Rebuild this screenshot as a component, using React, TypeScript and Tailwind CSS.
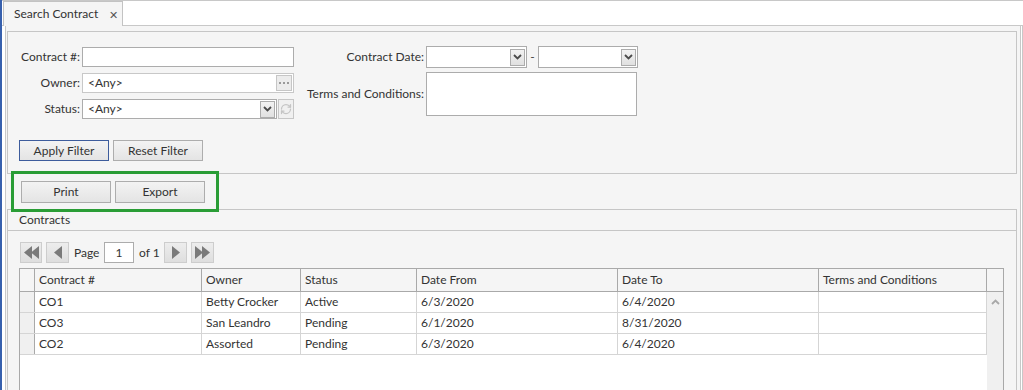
import React from "react";

const Chevron = () => (
  <svg width="9" height="6" viewBox="0 0 9 6">
    <path d="M1 1 L4.5 4.5 L8 1" fill="none" stroke="#4a4a4a" strokeWidth="1.8" />
  </svg>
);

const ArrowBox = () => (
  <div className="w-[15px] h-[17px] border border-[#acacac] bg-gradient-to-b from-[#f2f2f2] to-[#e0e0e0] flex items-center justify-center">
    <Chevron />
  </div>
);

const Tri = ({ dir }: { dir: "l" | "r" }) => (
  <svg width="8" height="13" viewBox="0 0 8 13">
    {dir === "l" ? <path d="M8 0 L0 6.5 L8 13 Z" fill="#7a7a7a" /> : <path d="M0 0 L8 6.5 L0 13 Z" fill="#7a7a7a" />}
  </svg>
);

const PagerBtn = ({ children, w = 22 }: { children: React.ReactNode; w?: number }) => (
  <div
    className="h-[21px] shrink-0 border border-[#cdcdcd] bg-gradient-to-b from-[#ededed] to-[#dedede] flex items-center justify-center"
    style={{ width: w }}
  >
    {children}
  </div>
);

const Btn = ({ label, blue }: { label: string; blue?: boolean }) => (
  <div
    className={`w-[90px] h-full border ${blue ? "border-[#3d5c9c]" : "border-[#adadad]"} bg-gradient-to-b from-[#f3f3f3] to-[#e4e4e4] flex items-center justify-center text-[#333] whitespace-nowrap`}
  >
    {label}
  </div>
);

const cols = "grid grid-cols-[15px_167px_99px_116px_201px_201px_168px_16px]";
const rowCols = "grid grid-cols-[15px_167px_99px_116px_201px_201px_168px]";

const rows = [
  ["CO1", "Betty Crocker", "Active", "6/3/2020", "6/4/2020", ""],
  ["CO3", "San Leandro", "Pending", "6/1/2020", "8/31/2020", ""],
  ["CO2", "Assorted", "Pending", "6/3/2020", "6/4/2020", ""],
];

export default function App() {
  return (
    <div className="w-[1023px] h-[390px] overflow-hidden bg-white flex relative font-['Lato',sans-serif] text-[12px] text-[#333] leading-none whitespace-nowrap">
      <div className="w-[2px] shrink-0 bg-[#3760ad]" />
      <div className="flex-1 flex flex-col min-w-0">
        {/* tab strip */}
        <div className="h-[26px] shrink-0 border-t border-[#c8c8c8] border-b flex items-end">
          <div className="w-[1px]" />
          <div className="w-[120px] h-[25px] -mb-px bg-[#f5f5f5] border border-b-0 border-[#c3c3c3] flex items-center pl-[10px] gap-[11px]">
            <span className="text-[#333]">Search Contract</span>
            <span className="text-[11px] text-[#555]">✕</span>
          </div>
        </div>
        {/* content */}
        <div className="flex-1 flex min-h-0">
          <div className="w-[3px] shrink-0" />
          <div className="w-[1016px] shrink-0 bg-[#f5f5f5] border-l border-r border-[#c8c8c8] flex flex-col pl-[1px] pt-[5px]">
            {/* filter panel */}
            <div className="w-[1010px] h-[143px] shrink-0 border border-[#c6c6c6] flex flex-col pt-[15px] pl-0">
              <div className="flex items-start">
                {/* left group */}
                <div className="flex flex-col gap-[6px]">
                  <div className="flex items-center h-[20px]">
                    <div className="w-[73px] text-right pr-[1px]">Contract #:</div>
                    <div className="ml-[1px] w-[212px] h-[20px] bg-white border border-[#acacac]" />
                  </div>
                  <div className="flex items-center h-[20px]">
                    <div className="w-[73px] text-right pr-[1px]">Owner:</div>
                    <div className="ml-[1px] w-[212px] h-[20px] bg-white border border-[#c8c8c8] flex items-center justify-between pl-[5px] pr-[1px]">
                      <span>&lt;Any&gt;</span>
                      <div className="w-[16px] h-[16px] border border-[#c6c6c6] bg-[#ececec] flex items-center justify-center gap-[2px]">
                        <span className="w-[2px] h-[2px] bg-[#9a9a9a]" />
                        <span className="w-[2px] h-[2px] bg-[#9a9a9a]" />
                        <span className="w-[2px] h-[2px] bg-[#9a9a9a]" />
                      </div>
                    </div>
                  </div>
                  <div className="flex items-center h-[20px]">
                    <div className="w-[73px] text-right pr-[1px]">Status:</div>
                    <div className="ml-[1px] w-[195px] h-[20px] bg-white border border-[#acacac] flex items-center justify-between pl-[5px] pr-[1px]">
                      <span>&lt;Any&gt;</span>
                      <ArrowBox />
                    </div>
                    <div className="ml-[1px] w-[16px] h-[20px] border border-[#c6c6c6] bg-[#f0f0f0] flex items-center justify-center">
                      <svg width="12" height="12" viewBox="0 0 24 24" fill="none" stroke="#c4c4c4" strokeWidth="2.5" strokeLinecap="round" strokeLinejoin="round">
                        <path d="M3 12a9 9 0 0 1 9-9 9.75 9.75 0 0 1 6.74 2.74L21 8" />
                        <path d="M21 3v5h-5" />
                        <path d="M21 12a9 9 0 0 1-9 9 9.75 9.75 0 0 1-6.74-2.74L3 16" />
                        <path d="M8 16H3v5" />
                      </svg>
                    </div>
                  </div>
                </div>
                {/* right group */}
                <div className="flex flex-col gap-[4px] ml-[5px] -mt-[1px]">
                  <div className="flex items-center h-[22px]">
                    <div className="w-[126px] text-right pr-[1px]">Contract Date:</div>
                    <div className="ml-[1px] w-[101px] h-[22px] bg-white border border-[#acacac] flex items-center justify-end pr-[1px]">
                      <ArrowBox />
                    </div>
                    <div className="w-[11px] text-center text-[#444]">-</div>
                    <div className="w-[100px] h-[22px] bg-white border border-[#acacac] flex items-center justify-end pr-[1px]">
                      <ArrowBox />
                    </div>
                  </div>
                  <div className="flex items-center h-[44px]">
                    <div className="w-[126px] text-right pr-[1px]">Terms and Conditions:</div>
                    <div className="ml-[1px] w-[211px] h-[44px] bg-white border border-[#acacac]" />
                  </div>
                </div>
              </div>
              <div className="flex gap-[4px] h-[21px] mt-[21px] pl-[11px]">
                <Btn label="Apply Filter" blue />
                <Btn label="Reset Filter" />
              </div>
            </div>
            {/* toolbar */}
            <div className="h-[35px] shrink-0 pt-[7px] pl-[14px] flex gap-[4px]">
              <div className="h-[22px] flex gap-[4px]">
                <Btn label="Print" />
                <Btn label="Export" />
              </div>
            </div>
            {/* contracts panel */}
            <div className="w-[1010px] flex-1 border border-[#c6c6c6] border-b-0 flex flex-col">
              <div className="h-[21px] shrink-0 border-b border-[#c6c6c6] flex items-center pl-[11px]">Contracts</div>
              <div className="mt-[11px] pl-[12px] flex items-center h-[21px]">
                <PagerBtn w={22}>
                  <div className="flex -space-x-[1px]">
                    <Tri dir="l" />
                    <Tri dir="l" />
                  </div>
                </PagerBtn>
                <div className="ml-[4px]">
                  <PagerBtn w={23}>
                    <Tri dir="l" />
                  </PagerBtn>
                </div>
                <span className="ml-[5px] w-[26px]">Page</span>
                <div className="ml-[4px] w-[30px] h-[21px] bg-white border border-[#acacac] flex items-center justify-center">1</div>
                <span className="ml-[5px] w-[20px]">of 1</span>
                <div className="ml-[5px]">
                  <PagerBtn w={23}>
                    <Tri dir="r" />
                  </PagerBtn>
                </div>
                <div className="ml-[4px]">
                  <PagerBtn w={23}>
                    <div className="flex -space-x-[1px]">
                      <Tri dir="r" />
                      <Tri dir="r" />
                    </div>
                  </PagerBtn>
                </div>
              </div>
              {/* grid */}
              <div className="mt-[5px] ml-[11px] w-[985px] h-[140px] bg-white border border-[#a9a9a9] flex flex-col">
                <div className={`${cols} h-[23px] shrink-0 bg-[#f5f5f5] border-b border-[#a9a9a9]`}>
                  <div className="border-r border-[#a9a9a9]" />
                  {["Contract #", "Owner", "Status", "Date From", "Date To", "Terms and Conditions"].map((h) => (
                    <div key={h} className="border-r border-[#a9a9a9] flex items-center pl-[4px] overflow-hidden">
                      {h}
                    </div>
                  ))}
                  <div />
                </div>
                <div className="flex flex-1">
                  <div className="flex-1 flex flex-col">
                    {rows.map((r, i) => (
                      <div key={i} className={`${rowCols} h-[21px] border-b border-[#d5d5d5]`}>
                        <div className="bg-[#f0f0f0] border-r border-[#a9a9a9]" />
                        {r.map((c, j) => (
                          <div key={j} className="border-r border-[#d5d5d5] flex items-center pl-[4px] overflow-hidden">
                            {c}
                          </div>
                        ))}
                      </div>
                    ))}
                  </div>
                  <div className="w-[16px] shrink-0 bg-[#f0f0f0] flex justify-center pt-[7px]">
                    <svg width="9" height="6" viewBox="0 0 9 6">
                      <path d="M1 5 L4.5 1.5 L8 5" fill="none" stroke="#a8a8a8" strokeWidth="1.8" />
                    </svg>
                  </div>
                </div>
              </div>
            </div>
          </div>
          <div className="w-[1px] shrink-0" />
          <div className="w-[1px] shrink-0 bg-[#c8c8c8]" />
        </div>
      </div>
      {/* annotation */}
      <div className="absolute left-[11px] top-[171px] w-[208px] h-[41px] border-[3px] border-[#2a9d36] pointer-events-none" />
    </div>
  );
}
